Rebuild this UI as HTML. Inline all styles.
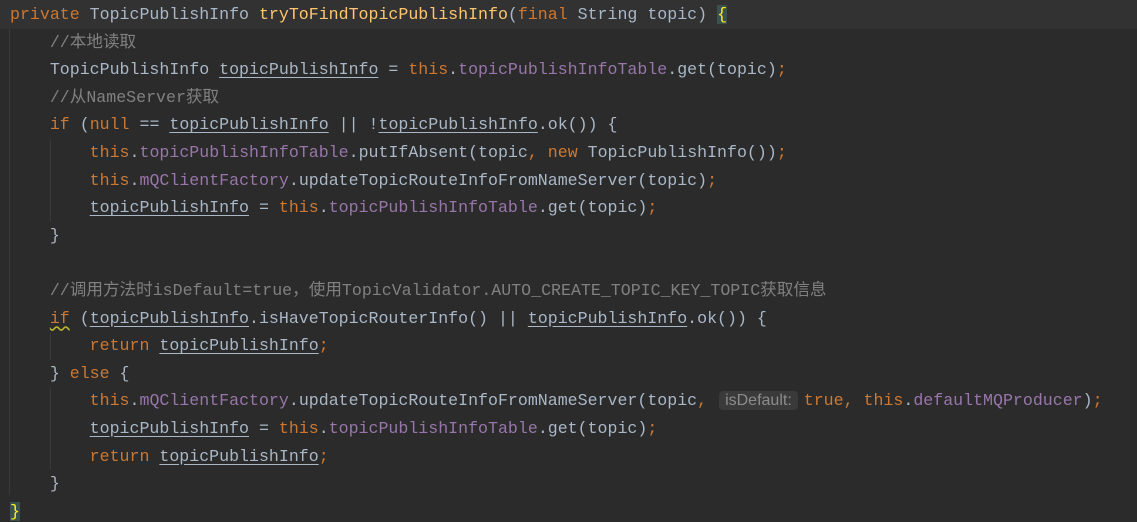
<!DOCTYPE html>
<html><head><meta charset="utf-8">
<style>
html,body{margin:0;padding:0;background:#2b2b2b;width:1137px;height:522px;overflow:hidden}
.ed{position:relative;top:1px;font-family:"Liberation Mono","Noto Sans CJK SC",monospace;font-size:16.6px;color:#a9b7c6}
.l{height:27.6px;line-height:27.6px;white-space:pre;padding-left:10px;position:relative}
.cur{background:#323232;margin-top:-1px;height:28.6px;line-height:29.6px}
.k{color:#cc7832}.f{color:#9876aa}.m{color:#ffc66d}.c{color:#808080}
.u{text-decoration:underline;text-decoration-color:#a9b7c6;text-underline-offset:3px}
.w{text-decoration:underline wavy #bbb529;text-underline-offset:3px}
.br{background:#3b514d;color:#ffef28}
.hint{font-family:"Liberation Sans",sans-serif;font-size:16px;color:#8c8c8c;background:#3a3a3a;border-radius:4px;padding:1px 6px;margin-right:6px;margin-left:2px}
.g{position:absolute;width:1px;background:#393939}
</style></head><body>
<div class="ed">
<div class="g" style="left:9px;top:27px;height:468px"></div>
<div class="g" style="left:50px;top:139px;height:83px"></div>
<div class="g" style="left:50px;top:332px;height:28px"></div>
<div class="g" style="left:50px;top:387px;height:83px"></div>
<div class="l cur"><span class="k">private </span>TopicPublishInfo <span class="m">tryToFindTopicPublishInfo</span>(<span class="k">final </span>String topic) <span class="br">{</span></div>
<div class="l">    <span class="c">//本地读取</span></div>
<div class="l">    TopicPublishInfo <span class="u">topicPublishInfo</span> = <span class="k">this</span>.<span class="f">topicPublishInfoTable</span>.get(topic)<span class="k">;</span></div>
<div class="l">    <span class="c">//从NameServer获取</span></div>
<div class="l">    <span class="k">if </span>(<span class="k">null </span>== <span class="u">topicPublishInfo</span> || !<span class="u">topicPublishInfo</span>.ok()) {</div>
<div class="l">        <span class="k">this</span>.<span class="f">topicPublishInfoTable</span>.putIfAbsent(topic<span class="k">, new </span>TopicPublishInfo())<span class="k">;</span></div>
<div class="l">        <span class="k">this</span>.<span class="f">mQClientFactory</span>.updateTopicRouteInfoFromNameServer(topic)<span class="k">;</span></div>
<div class="l">        <span class="u">topicPublishInfo</span> = <span class="k">this</span>.<span class="f">topicPublishInfoTable</span>.get(topic)<span class="k">;</span></div>
<div class="l">    }</div>
<div class="l"> </div>
<div class="l">    <span class="c">//调用方法时isDefault=true，使用TopicValidator.AUTO_CREATE_TOPIC_KEY_TOPIC获取信息</span></div>
<div class="l">    <span class="k w">if</span> (<span class="u">topicPublishInfo</span>.isHaveTopicRouterInfo() || <span class="u">topicPublishInfo</span>.ok()) {</div>
<div class="l">        <span class="k">return </span><span class="u">topicPublishInfo</span><span class="k">;</span></div>
<div class="l">    } <span class="k">else </span>{</div>
<div class="l">        <span class="k">this</span>.<span class="f">mQClientFactory</span>.updateTopicRouteInfoFromNameServer(topic<span class="k">, </span><span class="hint">isDefault:</span><span class="k">true, this</span>.<span class="f">defaultMQProducer</span>)<span class="k">;</span></div>
<div class="l">        <span class="u">topicPublishInfo</span> = <span class="k">this</span>.<span class="f">topicPublishInfoTable</span>.get(topic)<span class="k">;</span></div>
<div class="l">        <span class="k">return </span><span class="u">topicPublishInfo</span><span class="k">;</span></div>
<div class="l">    }</div>
<div class="l"><span class="br">}</span></div>
</div>
</body></html>
